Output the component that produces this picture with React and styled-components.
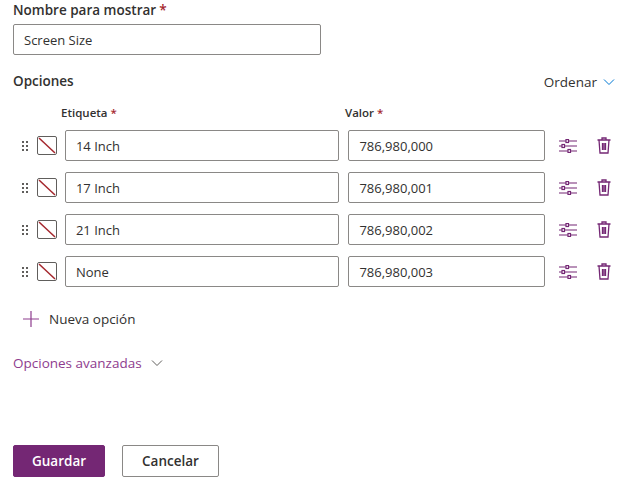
import React from 'react';
import styled, { createGlobalStyle } from 'styled-components';

const Global = createGlobalStyle`
  body { margin: 0; font-family: "Open Sans", "Liberation Sans", sans-serif; color: #323130; background: #fff; }
  * { box-sizing: border-box; }
`;

const Page = styled.div`
  width: 635px;
  padding: 0 13px;
`;

const Label = styled.div`
  font-size: 13.5px;
  font-weight: 600;
  height: 19px;
  line-height: 19px;
  margin-top: ${p => p.top || 0}px;
`;

const Req = styled.span`
  color: #a4262c;
  margin-left: 3px;
`;

const Input = styled.div`
  width: ${p => p.w}px;
  height: 31px;
  border: 1px solid #8a8886;
  border-radius: 2px;
  padding: 0 10px;
  display: flex;
  align-items: center;
  font-size: 13px;
`;

const HeaderRow = styled.div`
  display: flex;
  justify-content: space-between;
  align-items: center;
  margin-top: 17px;
  padding-right: 7px;
`;

const Sort = styled.div`
  display: flex;
  align-items: center;
  gap: 6px;
  font-size: 13.5px;
`;

const ColHeads = styled.div`
  display: flex;
  margin-top: 14px;
  padding-left: 48px;
  font-size: 11.5px;
  font-weight: 600;
`;

const ColHead = styled.div`
  width: ${p => p.w}px;
`;

const Rows = styled.div`
  display: flex;
  flex-direction: column;
  gap: 11px;
  margin-top: 10px;
`;

const Row = styled.div`
  display: flex;
  align-items: center;
`;

const Grip = styled.div`
  width: 24px;
  padding-left: 9px;
  display: flex;
`;

const Swatch = styled.div`
  width: 20px;
  height: 19px;
  border: 1px solid #605e5c;
  border-radius: 2px;
  margin-right: 8px;
  display: flex;
`;

const Gap = styled.div`
  width: 9px;
`;

const IconBtn = styled.div`
  width: 36px;
  display: flex;
  justify-content: center;
  margin-left: ${p => p.ml || 0}px;
`;

const Add = styled.div`
  display: flex;
  align-items: center;
  gap: 10px;
  margin-top: 23px;
  padding-left: 10px;
  font-size: 13.5px;
`;

const Advanced = styled.div`
  display: flex;
  align-items: center;
  gap: 9px;
  margin-top: 26px;
  color: #8e3c8e;
  font-size: 13.5px;
`;

const Buttons = styled.div`
  display: flex;
  gap: 17px;
  margin-top: 73px;
`;

const Button = styled.button`
  height: 32px;
  width: ${p => p.w}px;
  border-radius: 2px;
  font-family: inherit;
  font-size: 13.5px;
  font-weight: 600;
  border: 1px solid ${p => (p.primary ? '#742774' : '#8a8886')};
  background: ${p => (p.primary ? '#742774' : '#fff')};
  color: ${p => (p.primary ? '#fff' : '#323130')};
`;

const Chevron = ({ color }) => (
  <svg width="12" height="8" viewBox="0 0 12 8"><path d="M1 1.5l5 5 5-5" fill="none" stroke={color} strokeWidth="1" /></svg>
);

const GripIcon = () => (
  <svg width="6" height="10" viewBox="0 0 6 10" fill="#605e5c">
    {[0, 4, 8].map(y => [0, 4].map(x => <rect key={x + '-' + y} x={x} y={y} width="2" height="2" />))}
  </svg>
);

const Slash = () => (
  <svg width="18" height="17" viewBox="0 0 18 17"><path d="M1 1l16 15" stroke="#a4262c" strokeWidth="1.5" /></svg>
);

const Sliders = () => (
  <svg width="18" height="14" viewBox="0 0 18 14" fill="none" stroke="#742774" strokeWidth="1.2">
    <path d="M0 2h18M0 7h18M0 12h18" />
    <rect x="7" y="0.5" width="2.5" height="3" fill="#fff" />
    <rect x="3" y="5.5" width="2.5" height="3" fill="#fff" />
    <rect x="9" y="10.5" width="2.5" height="3" fill="#fff" />
  </svg>
);

const Trash = () => (
  <svg width="14" height="17" viewBox="0 0 14 17" fill="none" stroke="#742774" strokeWidth="1.3">
    <path d="M0.5 3h13M5 3V1h4v2M2 3l1 13h8l1-13M5.5 6v7M7 6v7M8.5 6v7" />
  </svg>
);

const options = [
  ['14 Inch', '786,980,000'],
  ['17 Inch', '786,980,001'],
  ['21 Inch', '786,980,002'],
  ['None', '786,980,003'],
];

export default function App() {
  return (
    <>
      <Global />
      <Page>
        <Label top={1}>Nombre para mostrar<Req>*</Req></Label>
        <div style={{ marginTop: 4 }}>
          <Input w={308}>Screen Size</Input>
        </div>
        <HeaderRow>
          <Label>Opciones</Label>
          <Sort>Ordenar <Chevron color="#0078d4" /></Sort>
        </HeaderRow>
        <ColHeads>
          <ColHead w={284}>Etiqueta<Req>*</Req></ColHead>
          <ColHead>Valor<Req>*</Req></ColHead>
        </ColHeads>
        <Rows>
          {options.map(([label, value]) => (
            <Row key={value}>
              <Grip><GripIcon /></Grip>
              <Swatch><Slash /></Swatch>
              <Input w={276}>{label}</Input>
              <Gap />
              <Input w={198}>{value}</Input>
              <IconBtn ml={5}><Sliders /></IconBtn>
              <IconBtn><Trash /></IconBtn>
            </Row>
          ))}
        </Rows>
        <Add>
          <svg width="16" height="16" viewBox="0 0 16 16"><path d="M8 0v16M0 8h16" stroke="#8e3c8e" strokeWidth="1.2" /></svg>
          Nueva opción
        </Add>
        <Advanced>Opciones avanzadas <Chevron color="#605e5c" /></Advanced>
        <Buttons>
          <Button primary w={92}>Guardar</Button>
          <Button w={97}>Cancelar</Button>
        </Buttons>
      </Page>
    </>
  );
}
